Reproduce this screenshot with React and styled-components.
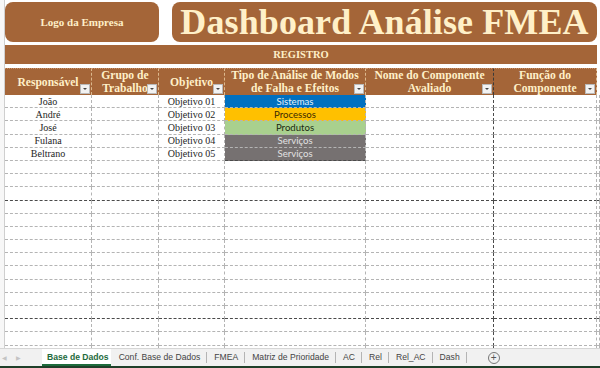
import React from "react";
import styled, { createGlobalStyle, css } from "styled-components";

const BROWN = "#a46538";
const CREAM = "#fff0c8";
const COLS = "87px 67px 66px 141px 128px 103px 1fr";

const Global = createGlobalStyle`
  html, body { margin: 0; padding: 0; background: #fff; }
  body { width: 600px; height: 368px; overflow: hidden; }
  #root { width: 600px; height: 368px; }
`;

const Frame = styled.div`
  width: 600px;
  height: 368px;
  display: flex;
  flex-direction: column;
  overflow: hidden;
  font-family: "Liberation Serif", "DejaVu Serif", serif;
`;

const Main = styled.div`
  flex: 1;
  display: flex;
  min-height: 0;
`;

const Gutter = styled.div`
  width: 4px;
  flex: none;
  background: #f7f7f7;
  border-right: 1px solid #cfcfcf;
`;

const Sheet = styled.div`
  flex: 1;
  display: flex;
  flex-direction: column;
  min-width: 0;
  padding-top: 2px;
`;

const TopBand = styled.div`
  display: flex;
  gap: 13px;
  height: 40px;
`;

const BrownBox = styled.div`
  background: ${BROWN};
  border-radius: 8px;
  display: flex;
  align-items: center;
  justify-content: center;
  color: ${CREAM};
  font-weight: bold;
  width: ${(p) => p.$w}px;
`;

const LogoText = styled.span`
  font-size: 11px;
`;

const TitleText = styled.span`
  font-size: 36px;
  line-height: 40px;
  letter-spacing: 0.1px;
`;

const Banner = styled.div`
  margin-top: 3px;
  width: 592px;
  height: 19px;
  background: ${BROWN};
  color: ${CREAM};
  font-weight: bold;
  font-size: 10.5px;
  display: flex;
  align-items: center;
  justify-content: center;
`;

const HeaderRow = styled.div`
  margin-top: 4px;
  height: 27px;
  display: grid;
  grid-template-columns: ${COLS};
`;

const HeadCell = styled.div`
  position: relative;
  background: ${BROWN};
  color: ${CREAM};
  font-weight: bold;
  font-size: 11.6px;
  line-height: 13px;
  text-align: center;
  display: flex;
  align-items: center;
  justify-content: center;
  white-space: pre-line;
  border-right: 1px dashed ${(p) => (p.$dark ? "#3a3a3a" : "#dcb88d")};
  border-top: 1px dotted #c9936a;
  box-sizing: border-box;
`;

const Blank = styled.div`
  background: #fff;
`;

const FilterBtn = styled.span`
  position: absolute;
  right: 1px;
  bottom: 1px;
  width: 10px;
  height: 10px;
  box-sizing: border-box;
  background: #f2f2f2;
  border: 1px solid #b9b9b9;
  display: flex;
  align-items: center;
  justify-content: center;
  &::after {
    content: "";
    border-left: 2px solid transparent;
    border-right: 2px solid transparent;
    border-top: 2px solid #444;
  }
`;

const Body = styled.div`
  flex: 1;
  overflow: hidden;
  display: grid;
  grid-auto-rows: 13.2px;
  align-content: start;
`;

const Row = styled.div`
  display: grid;
  grid-template-columns: ${COLS};
`;

const tones = {
  blue: css`background: #0070c0; color: #e3f0fb;`,
  gold: css`background: #ffc000; color: #3b2a00;`,
  green: css`background: #a9d08e; color: #1d2a12;`,
  grey: css`background: #767171; color: #e2e2e2;`,
};

const Cell = styled.div`
  box-sizing: border-box;
  border-bottom: 1px dashed ${(p) => (p.$brk ? "#4a4a4a" : "#b4b4b4")};
  border-right: 1px dashed ${(p) => (p.$dark ? "#4a4a4a" : "#b4b4b4")};
  display: flex;
  align-items: center;
  justify-content: center;
  font-size: 10px;
  color: #1e1e1e;
  white-space: nowrap;
  overflow: hidden;
  ${(p) => p.$tone && tones[p.$tone]}
  ${(p) =>
    p.$tone &&
    css`
      font-family: Lato, "Liberation Sans", sans-serif;
      font-size: 9.6px;
    `}
`;

const TabBar = styled.div`
  height: 20px;
  box-sizing: border-box;
  flex: none;
  background: #f1f1f1;
  border-top: 1px solid #d6d6d6;
  border-bottom: 2px solid #1f3f29;
  display: flex;
  align-items: center;
  font-family: "Liberation Sans", Arial, sans-serif;
  font-size: 8.6px;
  color: #444;
`;

const Nav = styled.div`
  width: 40px;
  display: flex;
  gap: 9px;
  padding-left: 2px;
  color: #c4c4c4;
  font-size: 6px;
`;

const Tab = styled.span`
  padding: 0 7px;
  height: 17px;
  line-height: 15px;
  display: flex;
  align-items: center;
  ${(p) =>
    p.$active
      ? css`
          background: #fff;
          color: #1e6b3c;
          font-weight: bold;
          padding: 0 2px 0 5px;
          box-shadow: inset 0 -2px 0 #1e6b3c;
          margin-right: 1px;
        `
      : css`
          position: relative;
          &::after {
            content: "";
            position: absolute;
            right: 0;
            top: 3px;
            height: 11px;
            border-right: 1px solid #b4b4b4;
          }
        `}
`;

const AddBtn = styled.span`
  margin-left: 21px;
  width: 10px;
  height: 10px;
  border: 1px solid #777;
  border-radius: 50%;
  display: flex;
  align-items: center;
  justify-content: center;
  color: #555;
  font-size: 10px;
  line-height: 10px;
`;

const headers = [
  "Responsável",
  "Grupo de\nTrabalho",
  "Objetivo",
  "Tipo de Análise de Modos\nde Falha e Efeitos",
  "Nome do Componente\nAvaliado",
  "Função do\nComponente",
];

const data = [
  ["João", "Objetivo 01", "Sistemas", "blue"],
  ["André", "Objetivo 02", "Processos", "gold"],
  ["José", "Objetivo 03", "Produtos", "green"],
  ["Fulana", "Objetivo 04", "Serviços", "grey"],
  ["Beltrano", "Objetivo 05", "Serviços", "grey"],
];

const tabs = [
  "Base de Dados",
  "Conf. Base de Dados",
  "FMEA",
  "Matriz de Prioridade",
  "AC",
  "Rel",
  "Rel_AC",
  "Dash",
];

export default function App() {
  const rows = [];
  for (let i = 0; i < 20; i++) {
    const d = data[i];
    const brk = i === 7 || i === 16;
    rows.push(
      <Row key={i}>
        <Cell $brk={brk}>{d ? d[0] : ""}</Cell>
        <Cell $brk={brk} />
        <Cell $brk={brk}>{d ? d[1] : ""}</Cell>
        <Cell $brk={brk || i === 4} $tone={d ? d[3] : undefined}>
          {d ? d[2] : ""}
        </Cell>
        <Cell $brk={brk} $dark />
        <Cell $brk={brk} />
        <Cell $brk={brk} />
      </Row>
    );
  }
  return (
    <>
      <Global />
      <Frame>
        <Main>
          <Gutter />
          <Sheet>
            <TopBand>
              <BrownBox $w={154}>
                <LogoText>Logo da Empresa</LogoText>
              </BrownBox>
              <BrownBox $w={425}>
                <TitleText>Dashboard Análise FMEA</TitleText>
              </BrownBox>
            </TopBand>
            <Banner>REGISTRO</Banner>
            <HeaderRow>
              {headers.map((h, i) => (
                <HeadCell key={h} $dark={i === 4}>
                  {h}
                  <FilterBtn />
                </HeadCell>
              ))}
              <Blank />
            </HeaderRow>
            <Body>{rows}</Body>
          </Sheet>
        </Main>
        <TabBar>
          <Nav>
            <span>◀</span>
            <span>▶</span>
          </Nav>
          {tabs.map((t, i) => (
            <Tab key={t} $active={i === 0}>
              {t}
            </Tab>
          ))}
          <AddBtn>+</AddBtn>
        </TabBar>
      </Frame>
    </>
  );
}
